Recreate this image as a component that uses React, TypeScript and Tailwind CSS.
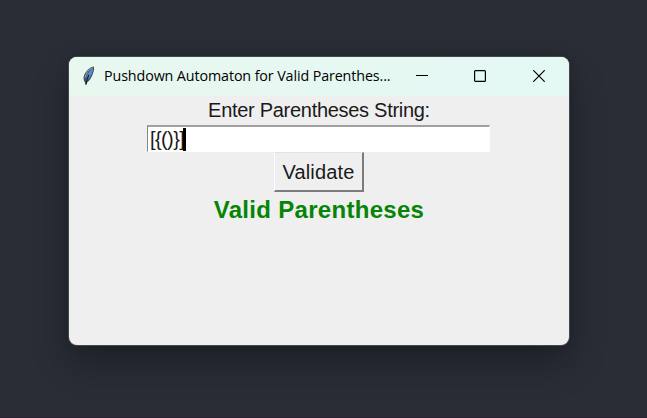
import React from "react";

function FeatherIcon() {
  return (
    <svg width="14" height="20" viewBox="0 0 14 20" className="mb-0.5 shrink-0">
      <path d="M11.8 0.6C8 1 4.4 4.6 2 9.3C1.1 12 1.4 14.4 2.9 16.4L3.9 19.6L5.1 16.4C8 14.6 9.6 11.6 10.8 8C11.9 5.4 12.5 2.8 11.8 0.6Z" fill="#46515a" />
      <path d="M10.9 2.2C8.2 4 5.4 7.2 4.5 10.8L4.4 14.6C7.6 12.8 8.9 9.8 9.9 7.2C10.7 5 11.1 3.6 10.9 2.2Z" fill="#4c8fdd" />
      <path d="M10.6 1.6C7.2 3 4 7 3 11.5" stroke="#aab3b8" strokeWidth="0.9" fill="none" />
      <path d="M6.9 8.8C6 10.6 4.6 13.4 4 18.4" stroke="#172334" strokeWidth="1.3" fill="none" />
    </svg>
  );
}

function TitleBar() {
  return (
    <header className="flex h-[39px] items-center bg-linear-to-r from-[#e8f8ef] to-[#e4f8f4] pl-[13px]">
      <FeatherIcon />
      <h1 className="mb-0.5 ml-2 w-[289px] shrink-0 whitespace-nowrap font-['Open_Sans','Noto_Sans',sans-serif] text-[14.3px] leading-5 tracking-[-0.11px] text-black">
        Pushdown Automaton for Valid Parenthes...
      </h1>
      <div className="flex h-full pb-px text-black">
        <button aria-label="Minimize" className="flex w-[58px] items-center justify-center">
          <svg width="12" height="12" viewBox="0 0 12 12"><path d="M0 5.5H12" stroke="currentColor" /></svg>
        </button>
        <button aria-label="Maximize" className="flex w-[58px] items-center justify-center">
          <svg width="12" height="12" viewBox="0 0 12 12"><rect x=".6" y=".6" width="10.8" height="10.8" rx="1" fill="none" stroke="currentColor" strokeWidth="1.2" /></svg>
        </button>
        <button aria-label="Close" className="flex w-[60px] items-center justify-center">
          <svg width="12" height="12" viewBox="0 0 12 12"><path d="M.3 .3L11.7 11.7M11.7 .3L.3 11.7" stroke="currentColor" strokeWidth="1.2" /></svg>
        </button>
      </div>
    </header>
  );
}

export default function App() {
  return (
    <main className="h-[418px] w-[647px] overflow-hidden border-b border-[#2b2233] bg-[#292d36] pl-[69px] pt-[57px] font-['Liberation_Sans',Arial,sans-serif]">
      <section className="h-[288px] w-[500px] overflow-hidden rounded-lg bg-[#efefef] shadow-[0_0_0_1px_#43464b,0_18px_36px_0px_rgba(0,0,0,0.3),0_0_12px_rgba(0,0,0,0.12)]">
        <TitleBar />
        <div className="flex flex-col items-center text-[#1a1a1a]">
          <label className="h-[29px] whitespace-nowrap text-[20px] leading-[29px] tracking-[-0.29px]">Enter Parentheses String:</label>
          <div className="mr-px flex h-[27px] w-[343px] items-center border-b border-l border-r border-t-2 border-b-white border-l-[#858585] border-r-white border-t-[#a0a0a0] bg-white pl-[2px]">
            <span className="pb-px text-[20px] leading-6 tracking-[-0.6px]">[&#123;()&#125;]</span>
            <span className="-ml-px h-[23px] w-[3px] bg-black" />
          </div>
          <button className="h-[40px] w-[90px] whitespace-nowrap border-b-2 border-l border-r-2 border-t border-b-[#7c7c7c] border-l-white border-r-[#7c7c7c] border-t-[#e3e3e3] text-[20px] leading-6 tracking-[0.15px]">
            Validate
          </button>
          <p className="whitespace-nowrap text-[24px] font-bold leading-9 tracking-[0.3px] text-[#068406]">Valid Parentheses</p>
        </div>
      </section>
    </main>
  );
}
